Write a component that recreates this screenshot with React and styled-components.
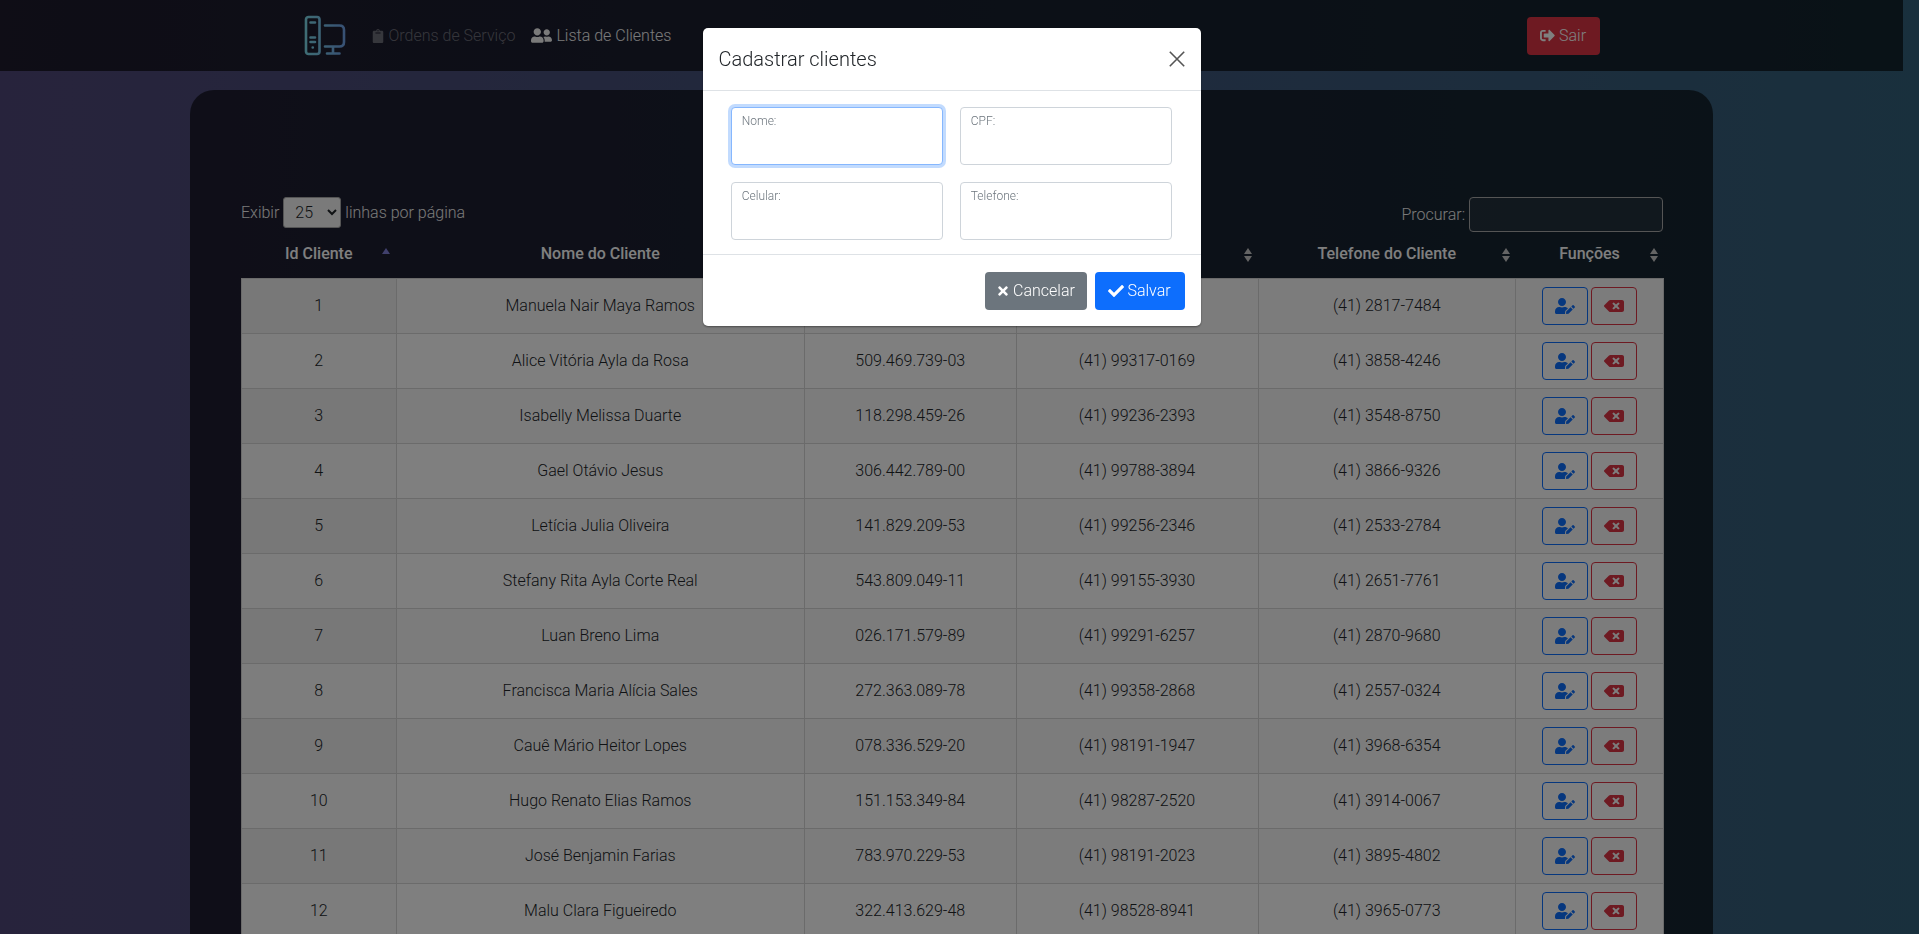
import styled, { createGlobalStyle } from 'styled-components'
import { FaClipboard, FaUserFriends, FaSignOutAlt, FaUserEdit, FaBackspace, FaTimes, FaCheck } from 'react-icons/fa'

const GlobalStyle = createGlobalStyle`
    html, body {
        margin: 0;
        height: 100%;
        overflow: hidden;
    }
    body {
        font-family: Roboto, "Liberation Sans", sans-serif;
        font-weight: 300;
        font-size: 16px;
        line-height: 24px;
        color: #fff;
        background: linear-gradient(90deg, #4f4778, #33607b);
    }
    * { box-sizing: border-box; }
`;

const Page = styled.div`
    width: 1903px;
    height: 934px;
    overflow: hidden;
`;

const Navbar = styled.nav`
    height: 71px;
    background: rgba(0, 0, 0, .62);
`;

const NavInner = styled.div`
    width: 1320px;
    height: 100%;
    margin: 0 auto;
    padding: 0 12px;
    display: flex;
    align-items: center;
`;

const NavLink = styled.a`
    display: flex;
    align-items: center;
    gap: 4px;
    margin-left: ${props => props.$first ? '25px' : '16px'};
    color: ${props => props.$active ? '#f4f4f4' : 'rgba(255, 255, 255, .36)'};
`;

const LogoutButton = styled.button`
    margin-left: auto;
    height: 38px;
    width: 73px;
    display: flex;
    align-items: center;
    justify-content: center;
    gap: 4px;
    border: 0;
    border-radius: 4px;
    background: #dc3545;
    color: #fff;
    font: inherit;
`;

const Card = styled.main`
    width: 1523px;
    margin: 19px auto 0;
    padding: 107px 50px 0 51px;
    height: 900px;
    background: rgba(0, 0, 0, .6);
    border-radius: 24px;
`;

const Controls = styled.div`
    display: flex;
    justify-content: space-between;
    align-items: flex-start;
    height: 37px;
`;

const Group = styled.label`
    display: flex;
    align-items: center;
    gap: 4px;
    height: ${props => props.$tall ? '35px' : '31px'};
    color: #f2f2f2;
`;

const PageSize = styled.select`
    width: 58px;
    height: 31px;
    padding: 0 0 0 7px;
    border: 1px solid #aaa;
    border-radius: 3px;
    background: #f4f4f4;
    color: #212529;
    font: inherit;
`;

const SearchInput = styled.input`
    width: 194px;
    height: 35px;
    border: 1px solid #aaa;
    border-radius: 4px;
    background: rgba(255, 255, 255, .06);
`;

const Table = styled.table`
    width: 1422px;
    table-layout: fixed;
    border-collapse: collapse;
`;

const HeadCell = styled.th`
    position: relative;
    height: 44px;
    padding: 0 18px 4px;
    font-weight: 500;
    color: #fff;
    text-align: center;
    &::before, &::after {
        content: '';
        position: absolute;
        right: 6px;
        border-left: 4px solid transparent;
        border-right: 4px solid transparent;
    }
    &::before {
        top: 14px;
        border-bottom: 6px solid ${props => props.$sorted ? '#8080d8' : '#c8c8c8'};
    }
    &::after {
        top: 22px;
        border-top: 6px solid ${props => props.$sorted ? 'transparent' : '#c8c8c8'};
    }
`;

const Row = styled.tr`
    background: ${props => props.$odd ? '#f9f9f9' : '#fff'};
`;

const Cell = styled.td`
    height: 55px;
    padding: 0;
    text-align: center;
    color: #212529;
    border: 1px solid #d6d6d6;
    background: ${props => props.$sorted ? (props.$odd ? '#f0f0f0' : '#fafafa') : 'transparent'};
`;

const Actions = styled.div`
    display: flex;
    justify-content: center;
    gap: 3px;
`;

const IconButton = styled.button`
    width: 46px;
    height: 38px;
    padding: 0;
    display: flex;
    align-items: center;
    justify-content: center;
    background: transparent;
    border: 1px solid ${props => props.$color};
    border-radius: 4px;
    color: ${props => props.$color};
    font-size: 16px;
`;

const Backdrop = styled.div`
    position: fixed;
    inset: 0;
    background: rgba(0, 0, 0, .5);
`;

const ModalWrap = styled.div`
    position: fixed;
    inset: 0;
    padding-right: 16px;
`;

const Modal = styled.div`
    width: 498px;
    margin: 28px auto 0;
    background: #fff;
    border-radius: 5px;
    color: #212529;
    box-shadow: 0 1px 2px rgba(0, 0, 0, .4);
`;

const ModalHeader = styled.header`
    height: 63px;
    padding: 0 16px;
    display: flex;
    align-items: center;
    justify-content: space-between;
    border-bottom: 1px solid #dee2e6;
`;

const ModalTitle = styled.h5`
    margin: 0;
    font-size: 20px;
    font-weight: 300;
`;

const CloseButton = styled.button`
    padding: 0;
    display: flex;
    border: 0;
    background: none;
`;

const FormGrid = styled.div`
    display: grid;
    grid-template-columns: 212.5px 212.5px;
    justify-content: center;
    gap: 16.5px 16.5px;
    height: 164px;
    padding: 16px 0;
    border-bottom: 1px solid #dee2e6;
`;

const Field = styled.div`
    position: relative;
`;

const FieldLabel = styled.label`
    position: absolute;
    top: 5px;
    left: 11px;
    font-size: 12px;
    line-height: 18px;
    color: #6c757d;
`;

const FieldInput = styled.input`
    display: block;
    width: 100%;
    height: 58px;
    border: 1px solid ${props => props.$focused ? '#86b7fe' : '#ced4da'};
    border-radius: 4px;
    box-shadow: ${props => props.$focused ? '0 0 0 3px rgba(13, 110, 253, .25)' : 'none'};
    outline: 0;
`;

const ModalFooter = styled.footer`
    height: 71px;
    padding: 0 16px;
    display: flex;
    align-items: center;
    justify-content: flex-end;
    gap: 8px;
`;

const FooterButton = styled.button`
    width: ${props => props.$width};
    height: 38px;
    display: flex;
    align-items: center;
    justify-content: center;
    gap: 3px;
    border: 0;
    border-radius: 4px;
    background: ${props => props.$bg};
    color: #fff;
    font: inherit;
`;

const LogoSvg = styled.svg`
    display: block;
    flex: none;
`;

const Logo = () => (
    <LogoSvg width="42" height="42" viewBox="0 0 42 42" fill="none">
        <defs>
            <linearGradient id="logo" x1="0" y1="0" x2="42" y2="0" gradientUnits="userSpaceOnUse">
                <stop offset="0" stopColor="#7fdcea" />
                <stop offset="1" stopColor="#6fa0e8" />
            </linearGradient>
        </defs>
        <g stroke="url(#logo)" strokeWidth="2.6" strokeLinecap="round">
            <rect x="2" y="2" width="13.5" height="37" rx="2.5" />
            <path d="M6.5 7.5h4.5M6.5 22.5h4.5M6.5 27h4.5M8.7 32.5h.1" />
            <path d="M21 10.5h14.5q4.5 0 4.5 4.5v12q0 4.5-4.5 4.5h-14.5M29 32v6M23 38.5h12.5" />
        </g>
    </LogoSvg>
);

const clients = [
    ['Manuela Nair Maya Ramos', '', '', '(41) 2817-7484'],
    ['Alice Vitória Ayla da Rosa', '509.469.739-03', '(41) 99317-0169', '(41) 3858-4246'],
    ['Isabelly Melissa Duarte', '118.298.459-26', '(41) 99236-2393', '(41) 3548-8750'],
    ['Gael Otávio Jesus', '306.442.789-00', '(41) 99788-3894', '(41) 3866-9326'],
    ['Letícia Julia Oliveira', '141.829.209-53', '(41) 99256-2346', '(41) 2533-2784'],
    ['Stefany Rita Ayla Corte Real', '543.809.049-11', '(41) 99155-3930', '(41) 2651-7761'],
    ['Luan Breno Lima', '026.171.579-89', '(41) 99291-6257', '(41) 2870-9680'],
    ['Francisca Maria Alícia Sales', '272.363.089-78', '(41) 99358-2868', '(41) 2557-0324'],
    ['Cauê Mário Heitor Lopes', '078.336.529-20', '(41) 98191-1947', '(41) 3968-6354'],
    ['Hugo Renato Elias Ramos', '151.153.349-84', '(41) 98287-2520', '(41) 3914-0067'],
    ['José Benjamin Farias', '783.970.229-53', '(41) 98191-2023', '(41) 3895-4802'],
    ['Malu Clara Figueiredo', '322.413.629-48', '(41) 98528-8941', '(41) 3965-0773'],
];

const columns = [
    ['Id Cliente', 154.5],
    ['Nome do Cliente', 408.5],
    ['CPF do Cliente', 211.5],
    ['Celular do Cliente', 242],
    ['Telefone do Cliente', 257.5],
    ['Funções', 148],
];

const App = () => {
    return (
        <Page>
            <GlobalStyle />
            <Navbar>
                <NavInner>
                    <Logo />
                    <NavLink $first><FaClipboard size={14} />Ordens de Serviço</NavLink>
                    <NavLink $active><FaUserFriends size={21} />Lista de Clientes</NavLink>
                    <LogoutButton><FaSignOutAlt size={15} />Sair</LogoutButton>
                </NavInner>
            </Navbar>
            <Card>
                <Controls>
                    <Group>
                        Exibir
                        <PageSize defaultValue="25">
                            <option>25</option>
                        </PageSize>
                        linhas por página
                    </Group>
                    <Group $tall>
                        Procurar:
                        <SearchInput />
                    </Group>
                </Controls>
                <Table>
                    <colgroup>
                        {columns.map(([name, width]) => <col key={name} width={width} />)}
                    </colgroup>
                    <thead>
                        <tr>
                            {columns.map(([name], i) => <HeadCell key={name} $sorted={i === 0}>{name}</HeadCell>)}
                        </tr>
                    </thead>
                    <tbody>
                        {clients.map((client, i) => (
                            <Row key={client[0]} $odd={i % 2 === 0}>
                                <Cell $sorted $odd={i % 2 === 0}>{i + 1}</Cell>
                                {client.map((value, j) => <Cell key={j}>{value}</Cell>)}
                                <Cell>
                                    <Actions>
                                        <IconButton $color="#0d6efd"><FaUserEdit size={20} /></IconButton>
                                        <IconButton $color="#dc3545"><FaBackspace size={20} /></IconButton>
                                    </Actions>
                                </Cell>
                            </Row>
                        ))}
                    </tbody>
                </Table>
            </Card>
            <Backdrop />
            <ModalWrap>
                <Modal>
                    <ModalHeader>
                        <ModalTitle>Cadastrar clientes</ModalTitle>
                        <CloseButton aria-label="Fechar">
                            <svg width="16" height="16" viewBox="0 0 16 16" fill="none" stroke="#555" strokeWidth="1.6">
                                <path d="M.8.8l14.4 14.4M15.2.8L.8 15.2" />
                            </svg>
                        </CloseButton>
                    </ModalHeader>
                    <FormGrid>
                        <Field>
                            <FieldInput $focused id="nome" />
                            <FieldLabel htmlFor="nome">Nome:</FieldLabel>
                        </Field>
                        <Field>
                            <FieldInput id="cpf" />
                            <FieldLabel htmlFor="cpf">CPF:</FieldLabel>
                        </Field>
                        <Field>
                            <FieldInput id="celular" />
                            <FieldLabel htmlFor="celular">Celular:</FieldLabel>
                        </Field>
                        <Field>
                            <FieldInput id="telefone" />
                            <FieldLabel htmlFor="telefone">Telefone:</FieldLabel>
                        </Field>
                    </FormGrid>
                    <ModalFooter>
                        <FooterButton $width="102px" $bg="#6c757d"><FaTimes size={14} />Cancelar</FooterButton>
                        <FooterButton $width="90px" $bg="#0d6efd"><FaCheck size={16} />Salvar</FooterButton>
                    </ModalFooter>
                </Modal>
            </ModalWrap>
        </Page>
    )
}

export default App
